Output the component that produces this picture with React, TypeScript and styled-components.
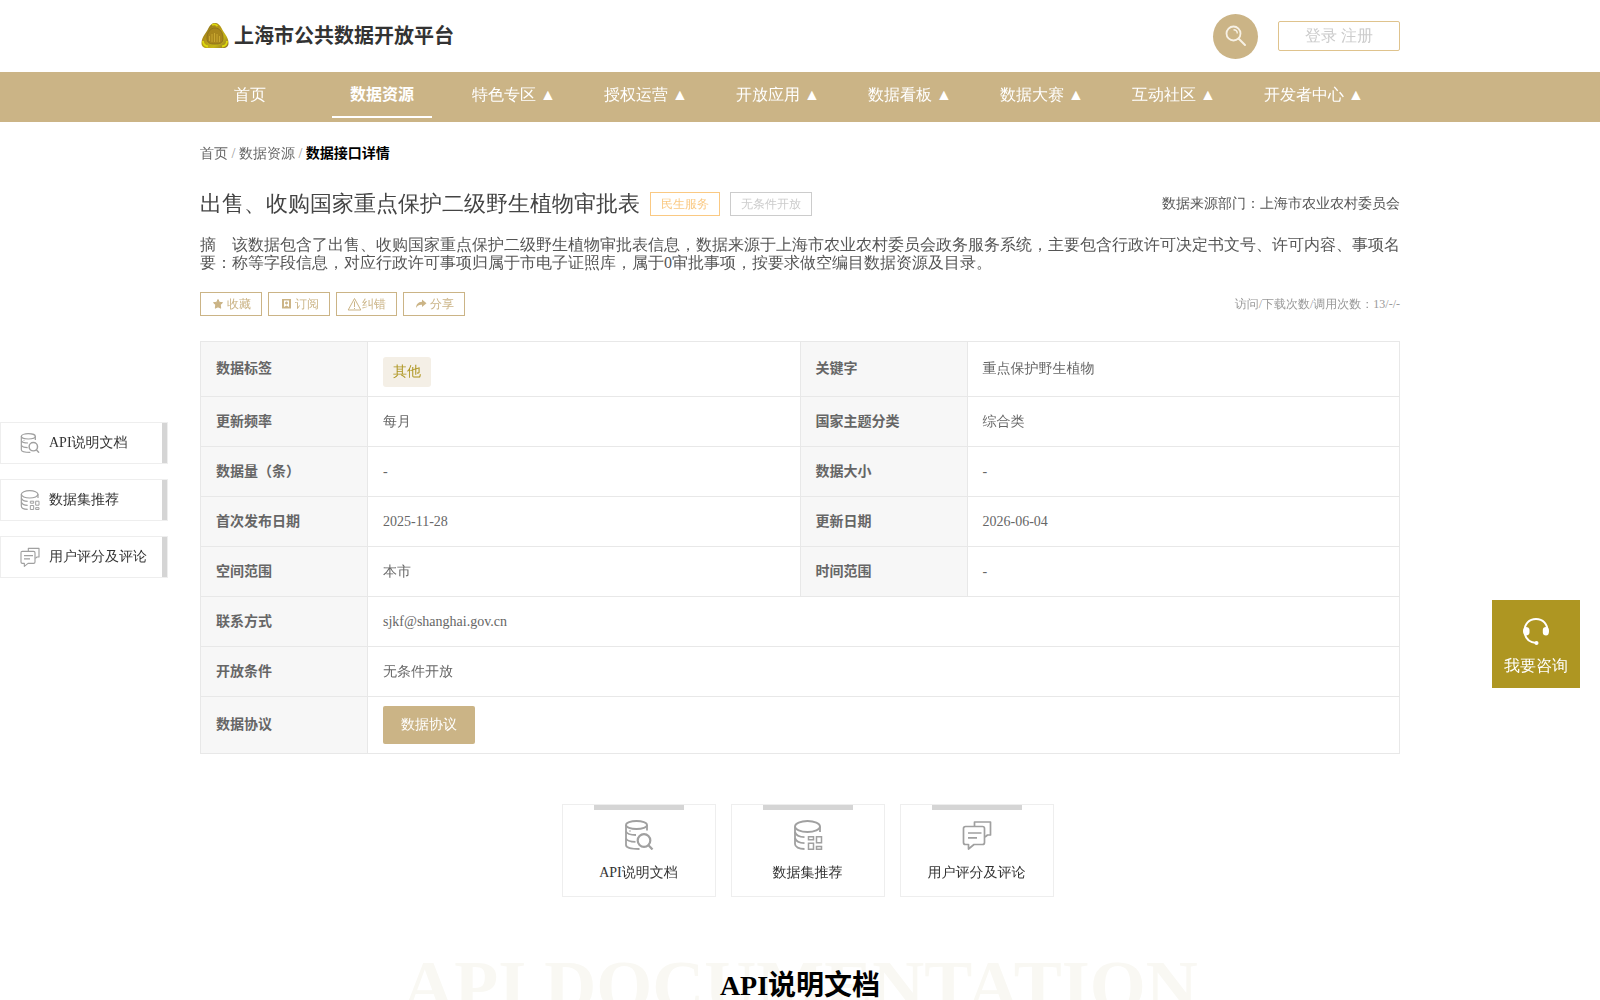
import React from 'react';
import styled, { createGlobalStyle } from 'styled-components';

// bold text uses a family that has a real bold weight
const boldFont = `'Liberation Serif', 'Noto Sans CJK SC', serif`;

const GlobalStyle = createGlobalStyle`
  * {
    box-sizing: border-box;
  }
  body {
    margin: 0;
    background: #fff;
    color: #666;
    font-family: 'Liberation Serif', 'WenQuanYi Zen Hei', 'Noto Sans CJK SC', serif;
    font-size: 14px;
  }
  a {
    color: inherit;
    text-decoration: none;
  }
  button {
    font-family: inherit;
    cursor: pointer;
  }
  strong,
  th,
  h2 {
    font-family: ${boldFont};
  }
`;

// --- Layout ---
const Container = styled.div`
  max-width: 1200px;
  margin: 0 auto;
`;

// --- Header ---
const HeaderInner = styled(Container)`
  height: 72px;
  display: flex;
  align-items: center;
  justify-content: space-between;
`;

const Brand = styled.a`
  display: flex;
  align-items: center;
  gap: 4px;
  color: #333;
  font-family: ${boldFont};
  font-size: 20px;
  font-weight: bold;
  line-height: 24px;
`;

const HeaderTools = styled.div`
  display: flex;
  align-items: center;
  gap: 20px;
`;

const SearchButton = styled.button`
  width: 45px;
  height: 45px;
  padding: 0;
  border: none;
  border-radius: 50%;
  background: #cbb486;
  display: flex;
  align-items: center;
  justify-content: center;
`;

const LoginBox = styled.div`
  width: 122px;
  height: 30px;
  border: 1px solid #dfc38d;
  border-radius: 2px;
  color: #ccc;
  font-size: 16px;
  line-height: 28px;
  text-align: center;
`;

// --- Nav ---
const NavBar = styled.nav`
  background: #cbb486;
`;

const NavList = styled(Container)`
  height: 50px;
  display: flex;
  gap: 32px;
`;

const NavItem = styled.a<{ $active?: boolean }>`
  min-width: 100px;
  height: 46px;
  padding: 0 8px;
  border-bottom: 2px solid ${({ $active }) => ($active ? '#fff' : 'transparent')};
  color: #fff;
  font-family: ${({ $active }) => ($active ? boldFont : 'inherit')};
  font-size: 16px;
  font-weight: ${({ $active }) => ($active ? 'bold' : 'normal')};
  line-height: 46px;
  text-align: center;
  white-space: nowrap;
`;

// --- Dataset heading ---
const Breadcrumb = styled.div`
  padding: 23px 0 21px;
  line-height: 18px;
  color: #999;

  a {
    color: #666;
  }
  strong {
    color: #000;
  }
`;

const TitleRow = styled.div`
  display: flex;
  align-items: center;
  gap: 10px;
  height: 40px;

  h1 {
    margin: 0;
    color: #444;
    font-size: 22px;
    font-weight: normal;
  }
`;

const Tag = styled.span<{ $color: string }>`
  height: 24px;
  padding: 0 10px;
  border: 1px solid ${({ $color }) => $color};
  color: ${({ $color }) => $color};
  font-size: 12px;
  line-height: 22px;
`;

const Source = styled.span`
  margin-left: auto;
  color: #555;
`;

const Abstract = styled.div`
  display: flex;
  margin-top: 12px;
  color: #555;
  font-size: 16px;
  line-height: 18px;

  span {
    flex: 0 0 32px;
  }
  p {
    margin: 0;
  }
`;

const ActionRow = styled.div`
  display: flex;
  align-items: center;
  gap: 6px;
  margin: 20px 0 25px;
`;

const ActionButton = styled.button`
  display: flex;
  align-items: center;
  height: 24px;
  padding: 0 10px;
  border: 1px solid #cbb486;
  background: #fff;
  color: #cbb486;
  font-size: 12px;
`;

const Stats = styled.span`
  margin-left: auto;
  color: #999;
  font-size: 12px;
`;

// --- Info table ---
const InfoTable = styled.table`
  width: 100%;
  table-layout: fixed;
  border-collapse: separate;
  border-spacing: 0;
  border: solid #e8e8e8;
  border-width: 0 1px 1px 0;

  th,
  td {
    height: 50px;
    padding: 0 15px;
    border: solid #e8e8e8;
    border-width: 1px 0 0 1px;
    text-align: left;
    line-height: 20px;
  }
  th {
    width: 167px;
    background: #f7f7f7;
  }
`;

const Label = styled.span`
  display: inline-block;
  margin: 15px 0 9px;
  padding: 0 10px;
  border-radius: 3px;
  background: #f4efe6;
  color: #ae9622;
  line-height: 30px;
  vertical-align: top;
`;

const AgreementButton = styled.button`
  display: block;
  height: 38px;
  margin: 9px 0;
  padding: 0 18px;
  border: none;
  border-radius: 2px;
  background: #cbb486;
  color: #fff;
  font-size: 14px;
`;

// --- Section cards ---
const Cards = styled.div`
  display: flex;
  justify-content: center;
  margin-top: 50px;
`;

const Card = styled.a`
  width: 154px;
  height: 93px;
  margin-left: 15px;
  border: 1px solid #eee;
  display: flex;
  flex-direction: column;
  align-items: center;
  color: #333;

  &::before {
    content: '';
    width: 90px;
    height: 5px;
    margin-bottom: 10px;
    background: #d5d5d5;
  }
  span {
    margin-top: 14px;
    line-height: 18px;
  }
`;

const SectionTitle = styled.section`
  display: grid;
  justify-items: center;
  align-items: center;
  margin-top: 44px;
  overflow: hidden;

  > * {
    grid-area: 1 / 1;
  }
  h2 {
    margin: 0;
    color: #000;
    font-size: 28px;
    line-height: 32px;
  }
`;

const Backdrop = styled.div`
  color: #f9f8f3;
  font-size: 72px;
  font-weight: bold;
  line-height: 90px;
  white-space: nowrap;
`;

// --- Floating panels ---
const SideNav = styled.nav`
  position: fixed;
  left: 0;
  top: 422px;
  display: flex;
  flex-direction: column;
  gap: 15px;
`;

const SideItem = styled.a`
  display: flex;
  align-items: center;
  gap: 9px;
  width: 168px;
  height: 42px;
  padding-left: 19px;
  border: 1px solid #eee;
  background: #fff;
  box-shadow: inset -5px 0 #d5d5d5;
  color: #333;
`;

const Consult = styled.button`
  position: fixed;
  right: 20px;
  top: 600px;
  width: 88px;
  height: 88px;
  padding: 5px 0 0;
  border: none;
  background: #ae9622;
  color: #fff;
  font-size: 16px;
  display: flex;
  flex-direction: column;
  align-items: center;
  justify-content: center;
  gap: 11px;
`;

// --- Icons ---
type IconProps = { size: number };

const Logo = () => (
  <svg width="30" height="28" viewBox="0 0 30 28" aria-hidden="true">
    <defs>
      <linearGradient id="gold" x1="0" y1="0" x2="1" y2="1">
        <stop offset="0" stopColor="#6d6222" />
        <stop offset="0.35" stopColor="#b08f18" />
        <stop offset="0.7" stopColor="#c4b416" />
        <stop offset="1" stopColor="#8a6a2a" />
      </linearGradient>
    </defs>
    <path d="M15 1c3 0 5 2 6.500 5 2 4.500 7 9 7 15 0 3.500-2 5-5 5H6.500c-3 0-5-1.500-5-5 0-6 5-10.500 7-15C10 3 12 1 15 1z" fill="url(#gold)" />
    <path d="M3 19c0 4 2.500 5 5 5.500M12 3c2-1 4-.5 5.500 1M27 19c0 3-1.500 5-5 5.500" stroke="#ddd90c" strokeWidth="1.800" fill="none" />
    <path d="M15 6c5 0 8 5 8 10s-3 6-8 6-8-1-8-6 3-10 8-10z" fill="#a8861c" stroke="#8f741c" />
    <path d="M9.500 19v-5M12 20v-8M14.500 20v-9M17 20v-8M19.500 20v-6" stroke="#c9a730" fill="none" />
  </svg>
);

const SearchIcon = () => (
  <svg width="22" height="22" viewBox="0 0 22 22" fill="none" stroke="#f7f1e5" aria-hidden="true">
    <circle cx="8.500" cy="8.500" r="7" strokeWidth="1.800" />
    <path d="M8.500 4.800c2.500 0 3.800 1.500 3.800 3.800" strokeWidth="1.400" />
    <path d="M13.500 13.500l6.500 6.500" strokeWidth="2" strokeLinecap="round" />
  </svg>
);

const ApiIcon = ({ size }: IconProps) => (
  <svg width={size} height={size} viewBox="0 0 30 30" fill="none" stroke="#a0a0a0" strokeWidth="1.800" aria-hidden="true">
    <ellipse cx="12.500" cy="5" rx="10.500" ry="4" />
    <path d="M2 5v20c0 2.500 5 4 13.500 4M23 5v5.500" />
    <path d="M2 11.500c1 2.500 5 3.500 10 3.500M2 18.500c1 2.300 4.500 3.300 9.500 3.400" />
    <circle cx="6" cy="11" r=".8" fill="#a0a0a0" stroke="none" />
    <circle cx="20" cy="20.500" r="6.300" strokeWidth="2.200" />
    <path d="M24.500 25.200l4 4.300" strokeWidth="2.200" />
  </svg>
);

const DataIcon = ({ size }: IconProps) => (
  <svg width={size} height={size} viewBox="0 0 30 30" fill="none" stroke="#a0a0a0" strokeWidth="1.800" aria-hidden="true">
    <ellipse cx="14.500" cy="6.500" rx="12.500" ry="5.500" />
    <path d="M2 6.500V24c0 3 4 5 9.500 5M27 6.500v5.500" />
    <path d="M2 12c1 3.500 5 5 9.500 5.200M2 18c1 3.500 5 5 9.500 5.200" />
    <path d="M15.500 16.800h5v3h-5zM23.500 16.800h5v6h-5zM15.500 23.300h5v6h-5zM23.500 26.500h5v2.700h-5z" strokeWidth="1.500" />
  </svg>
);

const CommentIcon = ({ size }: IconProps) => (
  <svg width={size} height={size} viewBox="0 0 30 30" fill="none" stroke="#a0a0a0" strokeWidth="1.700" strokeLinejoin="round" aria-hidden="true">
    <path d="M3.500 6.500h17a2 2 0 0 1 2 2v14a2 2 0 0 1-2 2H12l-5.500 4.500v-4.500h-3a2 2 0 0 1-2-2v-14a2 2 0 0 1 2-2z" />
    <path d="M12.500 6V2h16v13h-3L23 17" />
    <path d="M6 13h13.500M6 17.800h9" />
  </svg>
);

const HeadsetIcon = () => (
  <svg width="28" height="28" viewBox="0 0 28 28" fill="none" stroke="#fff" aria-hidden="true">
    <path d="M2.500 14C2.500 7 7 2 14 2s11.500 5 11.500 12" strokeWidth="2" />
    <path d="M2.800 17c1.200 5 5 8.500 11.500 9" strokeWidth="2" />
    <path d="M4 10c2 0 3.500 1 3.500 3v2.500c0 2-1.500 3-3.500 3-1.800 0-3-1.500-3-4.200S2.200 10 4 10zM24 10c2 0 3 1.500 3 4.300s-1 4.200-3 4.200-3.200-1-3.200-3V13c0-2 1.200-3 3.200-3z" fill="#fff" stroke="none" />
    <circle cx="14.500" cy="26" r="2" fill="#fff" stroke="none" />
  </svg>
);

const StarIcon = () => (
  <svg width="16" height="12" viewBox="-1 0 16 12" fill="#cbb486" stroke="#cbb486" strokeLinejoin="round" aria-hidden="true">
    <path d="M6 1.500l1.300 2.800 3.200.4-2.300 2.200.5 3.300L6 8.800l-2.700 1.400.5-3.300-2.300-2.200 3.200-.4z" />
  </svg>
);

const SubscribeIcon = () => (
  <svg width="16" height="12" viewBox="-1 0 16 12" aria-hidden="true">
    <path d="M2 1h9v9.500H2z" fill="#cbb486" />
    <path d="M4 2.500h5v6.500L6.500 7.500 4 9z" fill="#fff" />
    <path d="M6.500 3.500v3M5 5h3" stroke="#cbb486" strokeWidth="1.300" />
  </svg>
);

const WarnIcon = () => (
  <svg width="15" height="14" viewBox="0 0 15 14" fill="none" stroke="#cbb486" aria-hidden="true">
    <path d="M7.500 1.500L13.800 13H1.200z" strokeLinejoin="round" />
    <path d="M7.500 4.500v5.500M7.500 11v1" />
  </svg>
);

const ShareIcon = () => (
  <svg width="16" height="12" viewBox="-1 0 16 12" fill="#cbb486" aria-hidden="true">
    <path d="M7 1.500l4.500 3.700L7 9V6.800C4.500 6.500 2.500 7.500 1 10c0-3.500 2-6 6-6.300z" />
  </svg>
);

// --- Data ---
const navItems = [
  '首页',
  '数据资源',
  '特色专区 ▲',
  '授权运营 ▲',
  '开放应用 ▲',
  '数据看板 ▲',
  '数据大赛 ▲',
  '互动社区 ▲',
  '开发者中心 ▲',
];

const actions = [
  { name: '收藏', Icon: StarIcon },
  { name: '订阅', Icon: SubscribeIcon },
  { name: '纠错', Icon: WarnIcon },
  { name: '分享', Icon: ShareIcon },
];

const pairRows = [
  ['更新频率', '每月', '国家主题分类', '综合类'],
  ['数据量（条）', '-', '数据大小', '-'],
  ['首次发布日期', '2025-11-28', '更新日期', '2026-06-04'],
  ['空间范围', '本市', '时间范围', '-'],
];

const wideRows = [
  ['联系方式', 'sjkf@shanghai.gov.cn'],
  ['开放条件', '无条件开放'],
];

const sections = [
  { href: '#api', name: 'API说明文档', Icon: ApiIcon },
  { href: '#recommend', name: '数据集推荐', Icon: DataIcon },
  { href: '#comments', name: '用户评分及评论', Icon: CommentIcon },
];

export default function App() {
  return (
    <>
      <GlobalStyle />
      <header>
        <HeaderInner>
          <Brand href="#">
            <Logo />
            上海市公共数据开放平台
          </Brand>
          <HeaderTools>
            <SearchButton aria-label="搜索">
              <SearchIcon />
            </SearchButton>
            <LoginBox>
              <a href="#login">登录</a> <a href="#register">注册</a>
            </LoginBox>
          </HeaderTools>
        </HeaderInner>
        <NavBar>
          <NavList>
            {navItems.map((item) => (
              <NavItem key={item} href="#" $active={item === '数据资源'}>
                {item}
              </NavItem>
            ))}
          </NavList>
        </NavBar>
      </header>

      <main>
        <Container>
          <Breadcrumb>
            <a href="#">首页</a> / <a href="#">数据资源</a> / <strong>数据接口详情</strong>
          </Breadcrumb>
          <TitleRow>
            <h1>出售、收购国家重点保护二级野生植物审批表</h1>
            <Tag $color="#fac983">民生服务</Tag>
            <Tag $color="#ccc">无条件开放</Tag>
            <Source>数据来源部门：上海市农业农村委员会</Source>
          </TitleRow>
          <Abstract>
            <span>摘 要：</span>
            <p>
              该数据包含了出售、收购国家重点保护二级野生植物审批表信息，数据来源于上海市农业农村委员会政务服务系统，主要包含行政许可决定书文号、许可内容、事项名称等字段信息，对应行政许可事项归属于市电子证照库，属于0审批事项，按要求做空编目数据资源及目录。
            </p>
          </Abstract>
          <ActionRow>
            {actions.map(({ name, Icon }) => (
              <ActionButton key={name}>
                <Icon />
                {name}
              </ActionButton>
            ))}
            <Stats>访问/下载次数/调用次数：13/-/-</Stats>
          </ActionRow>

          <InfoTable>
            <tbody>
              <tr>
                <th scope="row">数据标签</th>
                <td>
                  <Label>其他</Label>
                </td>
                <th scope="row">关键字</th>
                <td>重点保护野生植物</td>
              </tr>
              {pairRows.map(([name, value, name2, value2]) => (
                <tr key={name}>
                  <th scope="row">{name}</th>
                  <td>{value}</td>
                  <th scope="row">{name2}</th>
                  <td>{value2}</td>
                </tr>
              ))}
              {wideRows.map(([name, value]) => (
                <tr key={name}>
                  <th scope="row">{name}</th>
                  <td colSpan={3}>{value}</td>
                </tr>
              ))}
              <tr>
                <th scope="row">数据协议</th>
                <td colSpan={3}>
                  <AgreementButton>数据协议</AgreementButton>
                </td>
              </tr>
            </tbody>
          </InfoTable>

          <Cards>
            {sections.map(({ href, name, Icon }) => (
              <Card key={name} href={href}>
                <Icon size={30} />
                <span>{name}</span>
              </Card>
            ))}
          </Cards>
        </Container>

        <SectionTitle id="api">
          <Backdrop aria-hidden="true">API DOCUMENTATION</Backdrop>
          <h2>API说明文档</h2>
        </SectionTitle>
      </main>

      <SideNav>
        {sections.map(({ href, name, Icon }) => (
          <SideItem key={name} href={href}>
            <Icon size={20} />
            {name}
          </SideItem>
        ))}
      </SideNav>
      <Consult>
        <HeadsetIcon />
        我要咨询
      </Consult>
    </>
  );
}
